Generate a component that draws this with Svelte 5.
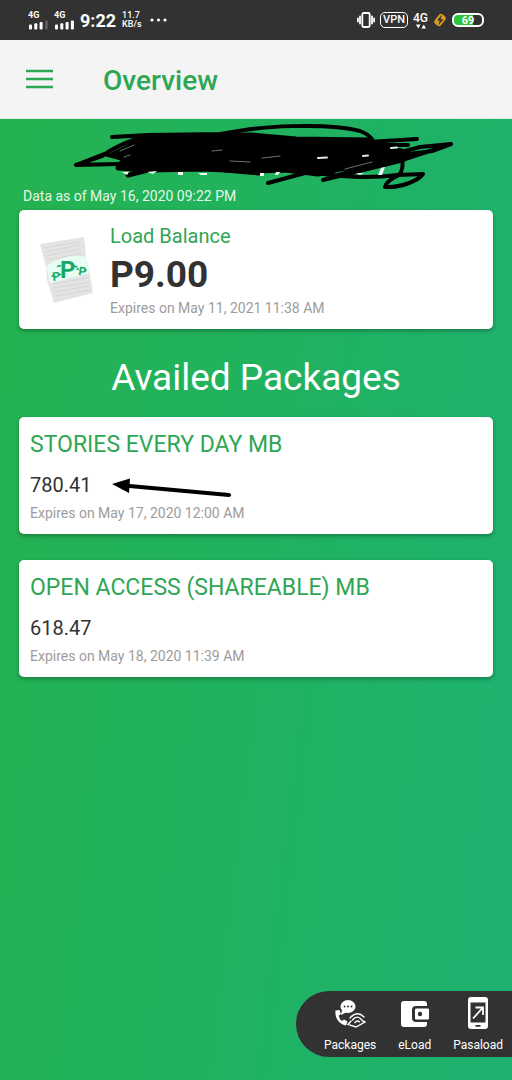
<script>
  const balance = { amount: 'P9.00', expires: 'May 11, 2021 11:38 AM' };

  const packages = [
    { name: 'STORIES EVERY DAY MB', left: '780.41', expires: 'May 17, 2020 12:00 AM', marked: true },
    { name: 'OPEN ACCESS (SHAREABLE) MB', left: '618.47', expires: 'May 18, 2020 11:39 AM', marked: false },
  ];

  const sims = [3, 4];
</script>

<div class="screen">
  <div class="status">
    <div class="status-side">
      {#each sims as bars}
        <div class="sim">
          <span>4G</span>
          <svg width="20" height="10" viewBox="0 0 20 10" fill="#fff">
            {#each [0, 1, 2, 3] as i}
              <rect x={1 + i * 5.3} y={4.5 - i * 1.3} width="3" height={5 + i * 1.3} rx="1" opacity={i < bars ? 1 : 0.2} />
            {/each}
          </svg>
        </div>
      {/each}
      <span class="clock">9:22</span>
      <div class="speed"><span>11.7</span><span>KB/s</span></div>
      <svg width="18" height="4" viewBox="0 0 18 4" fill="#fff"><circle cx="2" cy="2" r="1.6" /><circle cx="8.5" cy="2" r="1.6" /><circle cx="15" cy="2" r="1.6" /></svg>
    </div>
    <div class="status-side right">
      <svg width="18" height="16" viewBox="0 0 18 16" fill="none" stroke="#fff" stroke-width="1.8" stroke-linecap="round"><rect x="5.3" y="1" width="7.4" height="14" rx="1.5" /><path d="M3 4.5v7M.9 6.5v3M15 4.5v7M17.1 6.5v3" /></svg>
      <span class="vpn">VPN</span>
      <div class="net">
        <span>4G</span>
        <svg width="10" height="5" viewBox="0 0 10 5" fill="#fff"><path d="M0 .5h4.5L2.25 4.5zM5.5 4.5H10L7.75.5z" /></svg>
      </div>
      <svg width="14" height="16" viewBox="0 0 14 16"><rect x="3" y="2" width="8" height="12" rx="2.5" transform="rotate(38 7 8)" fill="#dc9a20" /><path d="M9 2.5 4 8.6h2.7L5.2 13.5 10.5 7.3H7.6z" fill="#323232" /></svg>
      <div class="battery"><span>69</span></div>
    </div>
  </div>

  <header>
    <button class="menu" aria-label="Menu">
      <svg width="28" height="20" viewBox="0 0 28 20" stroke="#2fa653" stroke-width="2.6"><path d="M0 2h27M0 10h27M0 18h27" /></svg>
    </button>
    <h1>Overview</h1>
  </header>

  <main>
    <div class="number">
      <svg class="scribble" width="400" height="72" viewBox="70 120 400 72" fill="none" stroke="#000" stroke-width="5" stroke-linecap="round" stroke-linejoin="round">
        <path d="M138 137 180 135 252 134 296 138 368 139 366 146 402 150 402 158 376 162 340 168 318 173 285 169 255 170 200 168 152 169 118 167 124 158 112 154 128 146z" fill="#000" />
        <path d="M112 136 148 134 220 133 251 128M228 133C255 124 330 122 360 130Q368 133 372 138" stroke-width="4" />
        <path d="M136 138Q116 145 102 155L76 164 118 163M76 164 104 153 124 158M368 141 417 138M366 144 408 144" stroke-width="4" />
        <path d="M128 174 160 166M225 169 259 172" />
        <path d="M402 154 432 150 451 143 420 146 398 152M402 159 448 144M404 159 323 179 376 162M268 182 320 168M318 172Q360 179 398 174L423 173C418 180 400 187 385 186Q386 180 399 174 404 168 402 158" stroke-width="4" />
        <path d="M120 150 134 144M124 156 130 154M212 150 222 149M230 160 250 161M262 157 280 155M345 168 372 161" stroke="#8fa899" stroke-width=".7" />
        <path d="M318 157l9-.5M363 155l5-.5M391 147l6-.5" stroke="#dcece2" stroke-width="2" />
        <path d="M122 171h7l-2 3zM147 171l10-1-4 3zM178 171h5v3h-5zM198 172h9v2h-6zM260 172h4v3h-4zM276 171h4l-2 3h-3zM356 172h8l-4 2zM381 167l4-1-3 8h-4z" fill="#f4fff8" stroke="none" />
      </svg>
    </div>
    <p class="asof">Data as of May 16, 2020 09:22 PM</p>

    <section class="card balance">
      <svg width="54" height="68" viewBox="0 0 54 68">
        <path d="M0 8 44 1 46 20 50 38 53 57 14 67 7 44 6 30z" fill="#e4e4e4" />
        <path d="M4 12 39 6M5 16l35-7M6 20l35-7M7 24l35-7M13 48l34-6M14 52l35-6M15 56l34-6M16 60l34-6" stroke="#d6d6d6" stroke-width="1" />
        <path d="M6 30Q26 17 46 21L50 37 10 47z" fill="#e6fff2" />
        <g fill="#18a86a" stroke="#18a86a" font-family="Roboto, sans-serif" font-weight="700">
          <text x="13" y="45" font-size="12" stroke="none" transform="rotate(-8 13 45)">P</text>
          <text x="20" y="42" font-size="24" stroke="none">P</text>
          <text x="38" y="39" font-size="12" stroke="none" transform="rotate(8 38 39)">P</text>
          <path d="M11.5 40l2.500-.4M19 38.600l2-.4M17 30.500l4-1M34 30l3.500 1M36.500 33l2.500.3M44.500 34l2 .4" stroke-width="1.6" fill="none" />
        </g>
      </svg>
      <div>
        <h3>Load Balance</h3>
        <strong>{balance.amount}</strong>
        <p class="expires">Expires on {balance.expires}</p>
      </div>
    </section>

    <h2>Availed Packages</h2>

    {#each packages as pkg}
      <section class="card package">
        <h3>{pkg.name}</h3>
        <div class="left">
          <span>{pkg.left}</span>
          {#if pkg.marked}
            <svg width="122" height="28" viewBox="0 0 122 28"><path d="M12 14.500 117 24" stroke="#000" stroke-width="4" stroke-linecap="round" /><path d="M0 13 18 7.500 17 22z" /></svg>
          {/if}
        </div>
        <p class="expires">Expires on {pkg.expires}</p>
      </section>
    {/each}

    <nav>
      <a href="#packages">
        <svg width="32" height="30" viewBox="0 0 32 30">
          <ellipse cx="14" cy="7.5" rx="7.5" ry="6.5" fill="#fff" /><path d="M8 11l-1 5 6-3z" fill="#fff" />
          <path d="M10.5 7.5h.1M14 7.5h.1M17.5 7.5h.1" stroke="#323232" stroke-width="1.8" stroke-linecap="round" />
          <path d="M1.5 11.5C.5 19 5 25 12 26.5l1.5-4-3.5-2-2 1.5C6 20.5 5 18.5 4.8 16.5L7 15 5.5 11z" fill="#fff" />
          <g fill="none" stroke="#fff" stroke-width="1.4" stroke-linecap="round"><path d="M16 19Q23 11 30 18M18.5 21Q23 15.5 27.5 20.5M17 22l-3 3.5 8 2.5 9-5-3-1.5M21 23.5Q23 21 25.5 22.8" /></g>
        </svg>
        <span>Packages</span>
      </a>
      <a href="#eload">
        <svg width="32" height="30" viewBox="0 0 32 30">
          <rect x="2" y="2" width="26" height="26" rx="3" fill="#fff" />
          <path d="M30 7H17q-4 0-4 4v8q0 4 4 4h13z" fill="#323232" />
          <rect x="16" y="9.5" width="14" height="11" rx="1" fill="#fff" /><circle cx="21" cy="15" r="2.2" fill="#323232" />
        </svg>
        <span>eLoad</span>
      </a>
      <a href="#pasaload">
        <svg width="22" height="32" viewBox="0 0 22 32">
          <rect x="1" y="0" width="20" height="32" rx="3" fill="#fff" /><path d="M3.5 5.5h15v20h-15zM8.5 28h5v1.8h-5z" fill="#323232" />
          <path d="M6 21.5 15.5 11M8.5 10.5h7.5v7.5" fill="none" stroke="#fff" stroke-width="1.8" />
        </svg>
        <span>Pasaload</span>
      </a>
    </nav>
  </main>
</div>

<style>
  :global(body) { margin: 0; }

  .screen { min-height: 100vh; display: flex; flex-direction: column; font-family: Roboto, sans-serif; color: #323232; }
  h1, h2, h3, p { margin: 0; font-weight: 400; }
  svg { display: block; flex: none; }

  .status { height: 40px; box-sizing: border-box; padding: 0 28px; display: flex; align-items: center; justify-content: space-between; background: #323232; color: #fff; }
  .status-side { display: flex; align-items: center; gap: 6px; }
  .status-side.right { gap: 5px; }
  .sim { display: flex; flex-direction: column; font-size: 9px; line-height: 9px; font-weight: 700; }
  .clock { font-size: 18px; font-weight: 700; }
  .speed { display: flex; flex-direction: column; font-size: 9px; line-height: 9px; font-weight: 500; margin-right: 2px; }
  .vpn { border: 1px solid #fff; border-radius: 5px; padding: 0 2px; font-size: 11px; line-height: 14px; font-weight: 500; }
  .net { display: flex; flex-direction: column; align-items: center; font-size: 12px; line-height: 12px; font-weight: 500; }
  .battery { width: 28px; height: 10px; border: 2px solid #fff; border-radius: 6px; background: linear-gradient(90deg, #2fc43c 69%, #323232 69%); font-size: 11px; line-height: 11px; font-weight: 700; text-align: center; }

  header { height: 79px; display: flex; align-items: center; gap: 49px; padding: 0 26px; background: #f4f4f4; border-bottom: 1px solid #dfeee3; box-sizing: border-box; }
  .menu { padding: 0; border: 0; background: none; }
  h1 { padding-top: 4px; font-size: 28px; line-height: 36px; font-weight: 500; color: #2fa653; }

  main { flex: 1; display: flex; flex-direction: column; padding: 0 19px 23px; background: linear-gradient(97deg, #24b251 5%, #1db271 100%); }
  .number { height: 67px; position: relative; }
  .scribble { position: absolute; left: 51px; top: 2px; }
  .asof { padding-left: 4px; font-size: 14px; line-height: 20px; color: #e4f8ea; margin-bottom: 4px; }

  .card { background: #fff; border-radius: 5px; box-shadow: 0 2px 4px rgba(0, 0, 0, 0.3); }
  .card h3 { color: #2fa653; }
  .expires { font-size: 14px; line-height: 20px; color: #9c9c9c; }

  .balance { display: flex; align-items: center; gap: 16px; padding: 11px 21px; }
  .balance h3 { font-size: 20px; line-height: 30px; }
  .balance strong { display: block; font-size: 37px; line-height: 47px; }

  h2 { margin: 25px 0 15px; font-size: 37px; line-height: 48px; color: #fff; text-align: center; }

  .package { padding: 11px; margin-bottom: 26px; }
  .package h3 { font-size: 23px; line-height: 34px; }
  .left { display: flex; align-items: center; gap: 21px; height: 36px; padding-top: 5px; font-size: 20px; }

  nav { margin: auto -19px 0 auto; display: flex; align-items: flex-end; gap: 22px; padding: 6px 9px 4px 28px; background: #323232; border-radius: 33px 0 0 33px; }
  nav a { display: flex; flex-direction: column; align-items: center; color: #fff; text-decoration: none; font-size: 12px; line-height: 16px; gap: 8px; }
</style>
